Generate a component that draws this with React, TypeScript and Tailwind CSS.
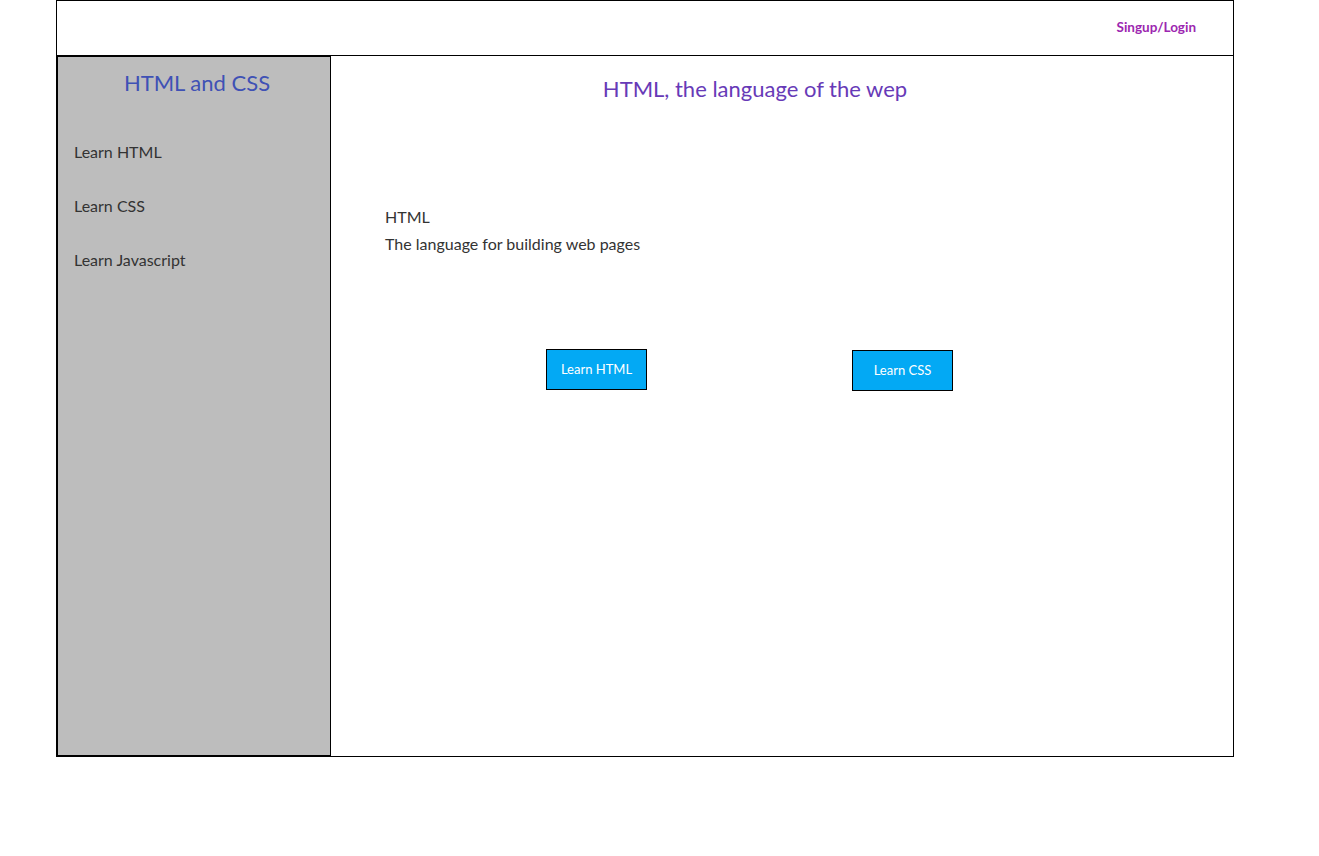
export default function App() {
  return (
    <div className="min-h-screen bg-white font-['Lato','Noto_Sans',sans-serif] text-[#333]">
      <div className="ml-[56px] flex h-[757px] w-[1178px] flex-col border border-black">
        <header className="flex h-[55px] shrink-0 items-center justify-end border-b border-black pb-[2px] pr-[37px]">
          <a className="text-[13.5px] font-bold text-[#9c27b0]">Singup/Login</a>
        </header>
        <div className="flex flex-1">
          <aside className="flex w-[274px] flex-col border border-black bg-[#bdbdbd]">
            <h2 className="mt-[11px] pl-[6px] text-center text-[22px] leading-[30px] text-[#3f51b5]">HTML and CSS</h2>
            <nav className="mt-[42px] flex flex-col gap-[30px] pl-[16px] text-[16px] leading-[24px]">
              <a>Learn HTML</a>
              <a>Learn CSS</a>
              <a>Learn Javascript</a>
            </nav>
          </aside>
          <main className="flex-1">
            <h1 className="mt-[18px] w-[848px] text-center text-[22px] leading-[30px] text-[#673ab7]">
              HTML, the language of the wep
            </h1>
            <div className="mt-[99px] pl-[54px] text-[16px] leading-[27px]">
              <p>HTML</p>
              <p>The language for building web pages</p>
            </div>
            <div className="mt-[92px] flex items-start pl-[215px]">
              <button className="h-[41px] w-[101px] border border-black bg-[#03a9f4] text-[13px] text-white">
                Learn HTML
              </button>
              <button className="ml-[205px] mt-[1px] h-[41px] w-[101px] border border-black bg-[#03a9f4] text-[13px] text-white">
                Learn CSS
              </button>
            </div>
          </main>
        </div>
      </div>
    </div>
  );
}
